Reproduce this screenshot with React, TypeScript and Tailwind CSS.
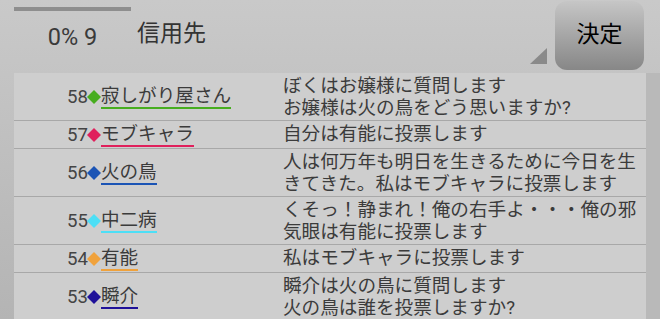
import React from "react";

interface Post {
  no: number;
  name: string;
  color: string;
  lines: string[];
}

const posts: Post[] = [
  { no: 58, name: "寂しがり屋さん", color: "#47ad1f", lines: ["ぼくはお嬢様に質問します", "お嬢様は火の鳥をどう思いますか?"] },
  { no: 57, name: "モブキャラ", color: "#e0205c", lines: ["自分は有能に投票します"] },
  { no: 56, name: "火の鳥", color: "#1b54b5", lines: ["人は何万年も明日を生きるために今日を生", "きてきた。私はモブキャラに投票します"] },
  { no: 55, name: "中二病", color: "#4ddff6", lines: ["くそっ！静まれ！俺の右手よ・・・俺の邪", "気眼は有能に投票します"] },
  { no: 54, name: "有能", color: "#f0a23c", lines: ["私はモブキャラに投票します"] },
  { no: 53, name: "瞬介", color: "#1f1199", lines: ["瞬介は火の鳥に質問します", "火の鳥は誰を投票しますか?"] },
];

const font = { fontFamily: '"Roboto", "Noto Sans CJK JP", sans-serif' };

function Diamond({ color }: { color: string }) {
  return (
    <svg width="14" height="14" viewBox="0 0 14 14" className="shrink-0 mx-[-0.5px]">
      <path d="M7 0 L14 7 L7 14 L0 7 Z" fill={color} />
    </svg>
  );
}

export default function App() {
  return (
    <div
      className="w-[660px] h-[319px] overflow-hidden bg-gradient-to-b from-[#c9c9c9] to-[#b4b4b4] text-[#3b3b3b]"
      style={font}
    >
      {/* Header */}
      <div className="flex h-[73px] pl-[14px]">
        <div className="w-[117px] flex flex-col">
          <div className="mt-[7px] h-[4px] bg-[#8e8e8e]" />
          <div className="mt-[12px] text-center text-[23.5px] leading-[28px] text-[#3a3a3a]">0% 9</div>
        </div>
        <div className="ml-[6px] w-[410px] flex flex-col">
          <div className="mt-[20px] text-[23px] leading-[28px] text-[#333]">信用先</div>
          <div className="flex-1" />
          <div className="flex justify-end">
            <div className="w-0 h-0 border-l-[17px] border-l-transparent border-b-[16px] border-b-[#8a8a8a]" />
          </div>
          <div className="h-[1px] bg-[#9a9a9a] mb-[11px]" />
        </div>
        <button className="ml-[8px] mt-[1px] w-[89px] h-[69px] rounded-[12px] bg-gradient-to-b from-[#c6c6c6] to-[#878787] text-[23px] text-black flex items-center justify-center">
          決定
        </button>
      </div>

      {/* List */}
      <div className="flex">
        <div className="ml-[14px] w-[632px] bg-[#cecece]">
          {posts.map(p => (
            <div key={p.no} className="flex border-b border-[#a8a8a8] pt-[2px] pb-[1px]">
              <div className="w-[269px] pl-[53px] flex items-center text-[18.6px]">
                <span className="leading-[22px] text-[#444]">{p.no}</span>
                <Diamond color={p.color} />
                <span
                  className="leading-[22px] border-b-2 text-[#3b3b3b]"
                  style={{ borderColor: p.color }}
                >
                  {p.name}
                </span>
              </div>
              <div className="flex-1 text-[18.6px] leading-[22px] text-[#3b3b3b]">
                {p.lines.map((l, i) => (
                  <div key={i} className="whitespace-nowrap">{l}</div>
                ))}
              </div>
            </div>
          ))}
        </div>
        <div className="w-[14px] bg-[#b9b9b9]" />
      </div>
    </div>
  );
}
